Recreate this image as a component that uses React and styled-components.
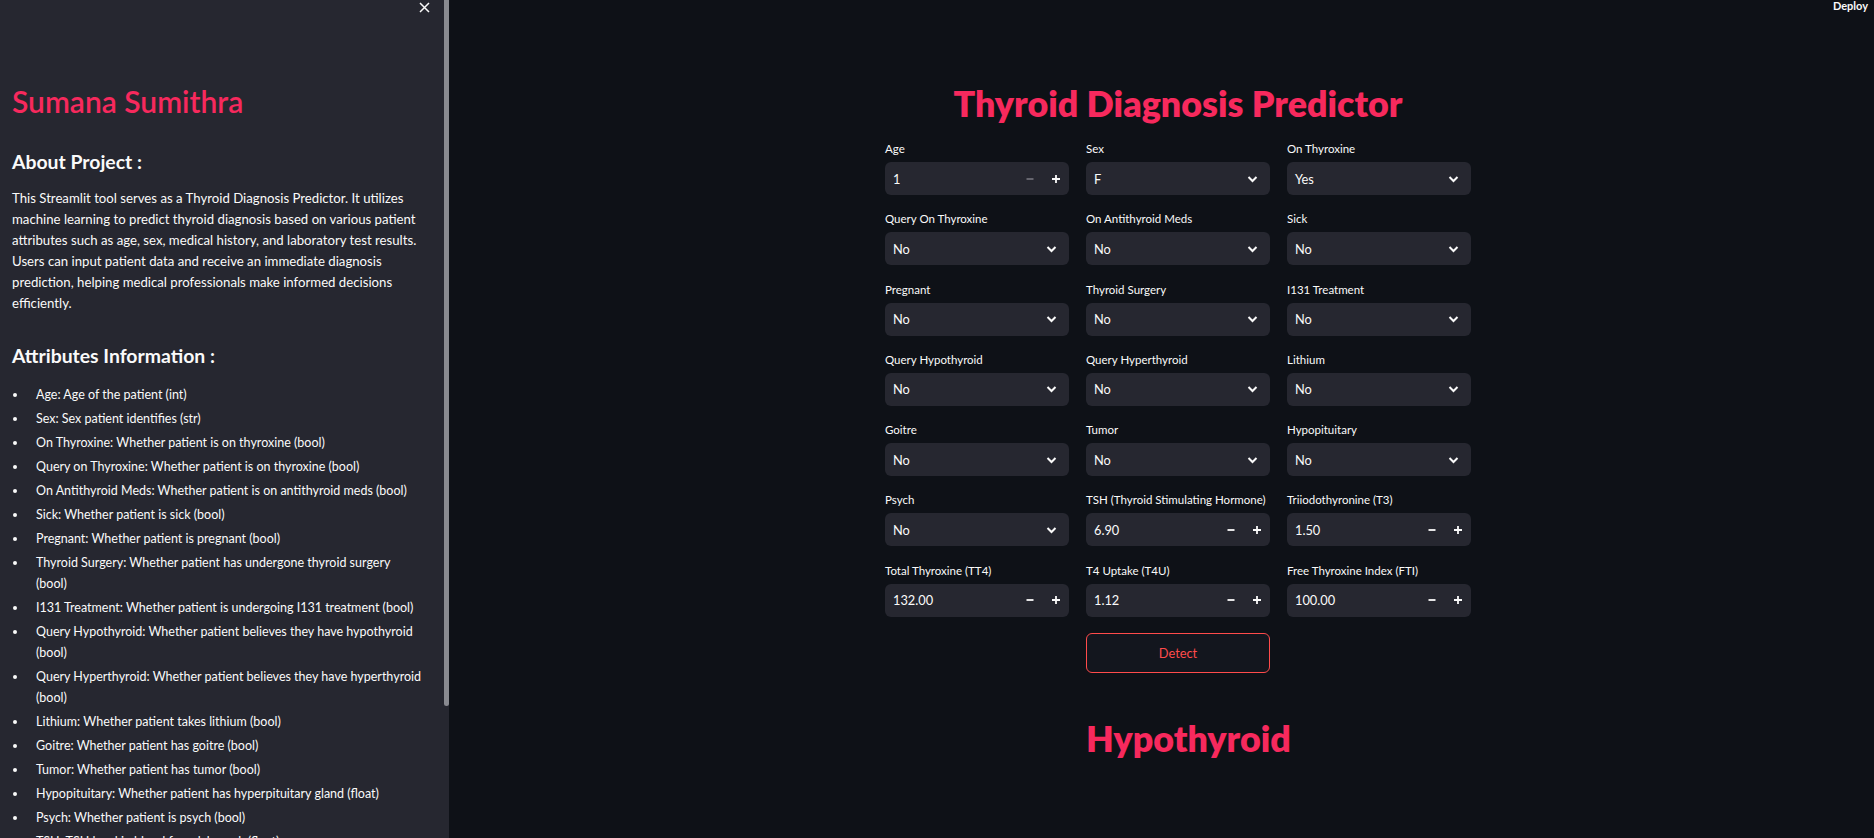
import styled, { createGlobalStyle } from "styled-components"

const GlobalStyle = createGlobalStyle`
  html, body {
    margin: 0;
    padding: 0;
    background: #0e1117;
    font-family: Lato, "Noto Sans", sans-serif;
    color: #fafafa;
  }
  * { box-sizing: border-box; }
`

const Page = styled.div`
  display: flex;
  height: 100vh;
  overflow: hidden;
`

const Sidebar = styled.aside`
  position: relative;
  width: 449px;
  flex-shrink: 0;
  background: #262730;
  overflow: hidden;
`

const ScrollThumb = styled.div`
  position: absolute;
  top: 0;
  right: 0;
  width: 5px;
  height: 706px;
  border-radius: 0 0 3px 3px;
  background: #898a90;
`

const CloseButton = styled.button`
  position: absolute;
  top: 1px;
  right: 19px;
  width: 12px;
  height: 12px;
  padding: 0;
  border: 0;
  background: none;
  color: #fafafa;
  display: flex;
  align-items: center;
  justify-content: center;
`

const SidebarContent = styled.div`
  padding: 83px 5px 24px 12px;
`

const Name = styled.h2`
  margin: 0 0 29px;
  font-size: 30px;
  line-height: 36px;
  font-weight: 600;
  color: #f7295d;
`

const SideHeading = styled.h3`
  margin: ${({ $top }) => $top || 0}px 0 ${({ $bottom }) => $bottom || 12}px;
  font-size: 19.4px;
  line-height: 28px;
  font-weight: 700;
`

const Paragraph = styled.p`
  margin: 0;
  max-width: 420px;
  font-size: 13.2px;
  line-height: 21px;
`

const List = styled.ul`
  margin: 0;
  padding: 0 0 0 16px;
`

const Item = styled.li`
  font-size: 12.5px;
  line-height: 21px;
  margin: 0 0 3px;
  padding-left: 8px;
`

const Main = styled.main`
  flex: 1;
  display: flex;
  flex-direction: column;
  align-items: center;
  padding-left: 33px;
  position: relative;
`

const Deploy = styled.div`
  position: absolute;
  top: 0;
  right: 6px;
  font-size: 11px;
  font-weight: 700;
  line-height: 12px;
`

const Block = styled.div`
  width: 586px;
  padding-top: 82px;
`

const Title = styled.h1`
  margin: 0 0 15px;
  text-align: center;
  font-size: 35.8px;
  line-height: 44px;
  font-weight: 800;
  color: #f7295d;
`

const Grid = styled.div`
  display: grid;
  grid-template-columns: repeat(3, minmax(0, 1fr));
  column-gap: 17px;
  row-gap: 16.3px;
`

const Field = styled.div`
  display: flex;
  flex-direction: column;
  gap: 5px;
`

const Label = styled.label`
  font-size: 11.5px;
  line-height: 16px;
  color: #fafafa;
  white-space: nowrap;
`

const Control = styled.div`
  height: 33px;
  display: flex;
  align-items: center;
  background: #262730;
  border-radius: 6px;
  padding-left: 8px;
  font-size: 12.8px;
  color: #fafafa;
`

const Value = styled.span`
  flex: 1;
`

const Step = styled.span`
  width: 26px;
  height: 100%;
  display: flex;
  align-items: center;
  justify-content: center;
  color: ${({ $dim }) => ($dim ? "#6c6d75" : "#fafafa")};
`

const Chevron = styled.span`
  width: 36px;
  display: flex;
  justify-content: center;
`

const Actions = styled.div`
  display: grid;
  grid-template-columns: repeat(3, minmax(0, 1fr));
  column-gap: 17px;
  margin-top: 16px;
`

const Middle = styled.div`
  grid-column: 2;
`

const DetectButton = styled.button`
  width: 100%;
  height: 40px;
  border: 1px solid #ff4b4b;
  border-radius: 6px;
  background: #13161e;
  color: #ff4b4b;
  font-family: inherit;
  font-size: 12.8px;
`

const Result = styled.h1`
  margin: 44px 0 0;
  font-size: 35.8px;
  line-height: 44px;
  font-weight: 800;
  white-space: nowrap;
  color: #f7295d;
`

const Minus = () => (
  <svg width="10" height="10" viewBox="0 0 10 10">
    <path d="M1.5 5h7" stroke="currentColor" strokeWidth="1.8" />
  </svg>
)

const Plus = () => (
  <svg width="10" height="10" viewBox="0 0 10 10">
    <path d="M1 5h8M5 1v8" stroke="currentColor" strokeWidth="1.8" />
  </svg>
)

const Down = () => (
  <svg width="11" height="8" viewBox="0 0 11 8">
    <path d="M1.5 2 5.5 6l4-4" fill="none" stroke="#fafafa" strokeWidth="2" />
  </svg>
)

const fields = [
  { label: "Age", type: "num", value: "1", dimMinus: true },
  { label: "Sex", value: "F" },
  { label: "On Thyroxine", value: "Yes" },
  { label: "Query On Thyroxine", value: "No" },
  { label: "On Antithyroid Meds", value: "No" },
  { label: "Sick", value: "No" },
  { label: "Pregnant", value: "No" },
  { label: "Thyroid Surgery", value: "No" },
  { label: "I131 Treatment", value: "No" },
  { label: "Query Hypothyroid", value: "No" },
  { label: "Query Hyperthyroid", value: "No" },
  { label: "Lithium", value: "No" },
  { label: "Goitre", value: "No" },
  { label: "Tumor", value: "No" },
  { label: "Hypopituitary", value: "No" },
  { label: "Psych", value: "No" },
  { label: "TSH (Thyroid Stimulating Hormone)", type: "num", value: "6.90" },
  { label: "Triiodothyronine (T3)", type: "num", value: "1.50" },
  { label: "Total Thyroxine (TT4)", type: "num", value: "132.00" },
  { label: "T4 Uptake (T4U)", type: "num", value: "1.12" },
  { label: "Free Thyroxine Index (FTI)", type: "num", value: "100.00" },
]

// wrap: the reference breaks these before their type hint
const attributes = [
  { text: "Age: Age of the patient", type: "(int)" },
  { text: "Sex: Sex patient identifies", type: "(str)" },
  { text: "On Thyroxine: Whether patient is on thyroxine", type: "(bool)" },
  { text: "Query on Thyroxine: Whether patient is on thyroxine", type: "(bool)" },
  { text: "On Antithyroid Meds: Whether patient is on antithyroid meds", type: "(bool)" },
  { text: "Sick: Whether patient is sick", type: "(bool)" },
  { text: "Pregnant: Whether patient is pregnant", type: "(bool)" },
  { text: "Thyroid Surgery: Whether patient has undergone thyroid surgery", type: "(bool)", wrap: true },
  { text: "I131 Treatment: Whether patient is undergoing I131 treatment", type: "(bool)" },
  { text: "Query Hypothyroid: Whether patient believes they have hypothyroid", type: "(bool)", wrap: true },
  { text: "Query Hyperthyroid: Whether patient believes they have hyperthyroid", type: "(bool)", wrap: true },
  { text: "Lithium: Whether patient takes lithium", type: "(bool)" },
  { text: "Goitre: Whether patient has goitre", type: "(bool)" },
  { text: "Tumor: Whether patient has tumor", type: "(bool)" },
  { text: "Hypopituitary: Whether patient has hyperpituitary gland", type: "(float)" },
  { text: "Psych: Whether patient is psych", type: "(bool)" },
  { text: "TSH: TSH level in blood from lab work", type: "(float)" },
  { text: "T3: T3 level in blood from lab work", type: "(float)" },
  { text: "TT4: TT4 level in blood from lab work", type: "(float)" },
  { text: "T4U: T4U level in blood from lab work", type: "(float)" },
  { text: "FTI: FTI level in blood from lab work", type: "(float)" },
]

const App = () => (
  <>
    <GlobalStyle />
    <Page>
      <Sidebar>
        <CloseButton aria-label="Close sidebar">
          <svg width="11" height="11" viewBox="0 0 11 11">
            <path d="M1 1l9 9M10 1l-9 9" stroke="currentColor" strokeWidth="1.5" />
          </svg>
        </CloseButton>
        <SidebarContent>
          <Name>Sumana Sumithra</Name>
          <SideHeading>About Project :</SideHeading>
          <Paragraph>
            This Streamlit tool serves as a Thyroid Diagnosis Predictor. It utilizes machine
            learning to predict thyroid diagnosis based on various patient attributes such as
            age, sex, medical history, and laboratory test results. Users can input patient data
            and receive an immediate diagnosis prediction, helping medical professionals make
            informed decisions efficiently.
          </Paragraph>
          <SideHeading $top={28} $bottom={14}>Attributes Information :</SideHeading>
          <List>
            {attributes.map((a) => (
              <Item key={a.text}>
                {a.text}
                {a.wrap ? <br /> : " "}
                {a.type}
              </Item>
            ))}
          </List>
        </SidebarContent>
        <ScrollThumb />
      </Sidebar>
      <Main>
        <Deploy>Deploy</Deploy>
        <Block>
          <Title>Thyroid Diagnosis Predictor</Title>
          <Grid>
            {fields.map((f) => (
              <Field key={f.label}>
                <Label>{f.label}</Label>
                <Control>
                  <Value>{f.value}</Value>
                  {f.type === "num" ? (
                    <>
                      <Step $dim={f.dimMinus}>
                        <Minus />
                      </Step>
                      <Step>
                        <Plus />
                      </Step>
                    </>
                  ) : (
                    <Chevron>
                      <Down />
                    </Chevron>
                  )}
                </Control>
              </Field>
            ))}
          </Grid>
          <Actions>
            <Middle>
              <DetectButton>Detect</DetectButton>
              <Result>Hypothyroid</Result>
            </Middle>
          </Actions>
        </Block>
      </Main>
    </Page>
  </>
)

export default App
